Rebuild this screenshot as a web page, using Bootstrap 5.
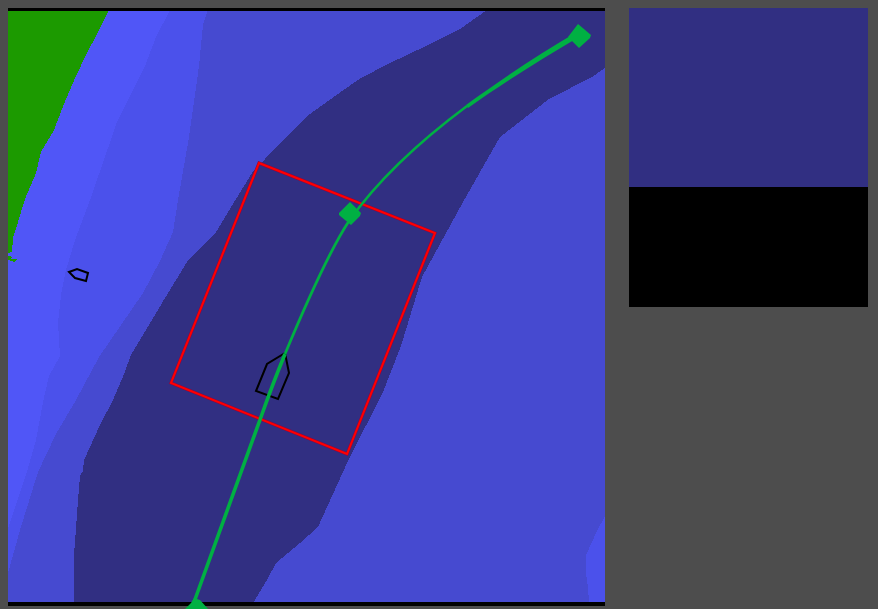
<!DOCTYPE html>
<html lang="en">
<head>
<meta charset="utf-8">
<meta name="viewport" content="width=device-width, initial-scale=1">
<title>Channel chart</title>
<link href="https://cdn.jsdelivr.net/npm/bootstrap@5.3.0/dist/css/bootstrap.min.css" rel="stylesheet">
<style>
body { background: #4d4d4d; }
.chart-layout { display: grid; grid-template-columns: 597fr 239fr; column-gap: 24px; padding: 8px 10px 0 8px; }
.chart-map { height: auto; }
.depth-fill { background: #312f82; aspect-ratio: 239 / 179; }
.empty-fill { background: #000; aspect-ratio: 239 / 120; }
</style>
</head>
<body>
<main class="chart-layout align-items-start">
  <svg class="chart-map d-block w-100" viewBox="8 8 597 601" role="img" aria-label="Depth chart with vessel route">
    <rect x="8" y="8" width="597" height="598" fill="#464ad0"/>
    <g shape-rendering="crispEdges">
      <!-- depth bands, shallow to deep -->
      <path fill="#4b51eb" d="M8 10H208L203 25 199 66 189 137 178 200 173 232 160 261 143 293 99 357 76 400 56 434 38 472 20 530 8 573Z"/>
      <path fill="#5056f7" d="M8 10H170L156 37 145 66 117 122 90 200 75 240 66 270 61 295 58 323 60 356 49 376 43 402 36 440 26 475 8 528Z"/>
      <path fill="#1c9a00" d="M8 10H109L98 32 86 55 76 76 64 104 54 130 41 152 36 173 25 199 18 222 13 238 12 252 8 253V256H10L12 258 10 259H17L15 262 8 260Z"/>
      <path fill="#312f82" d="M487 10H605V68L592 77 549 99 500 137 463 202 422 277 401 346 383 392 348 461 318 527 300 543 276 563 267 580 253 603H74V555L76 528 78 500 80 476 83 471 84 460 100 425 113 400 124 374 131 355 165 298 187 262 216 232 236 199 252 173 278 145 310 114 342 91 361 78 388 64 428 45 460 29Z"/>
      <path fill="#4b51eb" d="M605 516L597 531 586 555V574L588 587 589 603H605Z"/>
    </g>
    <rect x="8" y="8" width="597" height="3" fill="#000" shape-rendering="crispEdges"/>
    <rect x="8" y="602" width="597" height="4" fill="#000" shape-rendering="crispEdges"/>
    <!-- vessels -->
    <g fill="none" stroke="#000" stroke-width="2">
      <path d="M69 272L77 269 88 273 86 281 75 278Z"/>
      <path d="M285 353L267 364 256 391 278 399 289 373Z"/>
    </g>
    <!-- safety area -->
    <path d="M259 163L435 233 347 454 171 383Z" fill="none" stroke="#97003d" stroke-width="3"/>
    <path d="M259 163L435 233 347 454 171 383Z" fill="none" stroke="#f00" stroke-width="2"/>
    <!-- route -->
    <g fill="none" stroke="#00b043">
      <path stroke-width="3.6" d="M193 605L261 417Q273 383 285 354"/>
      <path stroke-width="2.8" d="M285 354C305 306 328 253 349 221"/>
      <path stroke-width="2.6" d="M349 221C378 180 416 144 467 106"/>
    </g>
    <g fill="#00b043">
      <path d="M466 105C500 80 538 55 577 32L579 37C542 59 501 84 468 108Z"/>
      <path d="M578 24L591 35 590 38 579 48 568 37Z"/>
      <path d="M350 202L361 213 360 216 351 225 339 215V213Z"/>
      <path d="M194 598L200 600 209 610H184L191 603Z"/>
    </g>
  </svg>
  <aside aria-label="Depth profile">
    <div class="depth-fill"></div>
    <div class="empty-fill"></div>
  </aside>
</main>
<script src="https://cdn.jsdelivr.net/npm/bootstrap@5.3.0/dist/js/bootstrap.bundle.min.js"></script>
</body>
</html>
